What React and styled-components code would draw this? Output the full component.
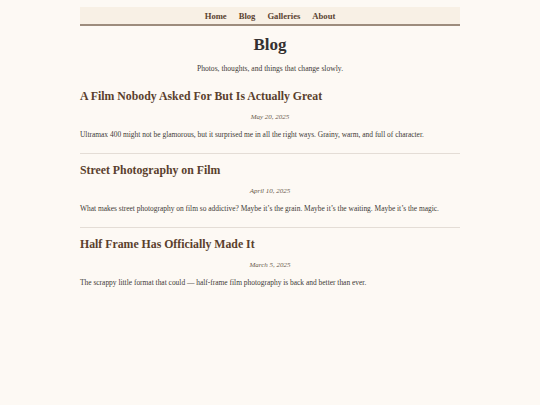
import React from 'react'
import styled, { createGlobalStyle } from 'styled-components'

const GlobalStyle = createGlobalStyle`
  html, body {
    margin: 0;
    padding: 0;
    background: #fdf9f4;
  }
  body {
    font-family: "Liberation Serif", "Times New Roman", serif;
    color: #3d3a36;
  }
`;

const Page = styled.div`
  max-width: 380px;
  margin: 0 auto;
  padding-top: 7px;
`;

const Nav = styled.nav`
  display: flex;
  justify-content: center;
  align-items: center;
  gap: 12px;
  height: 17px;
  background: #f8f0e5;
  border-bottom: 2px solid #9d8c7d;
`;

const NavLink = styled.a`
  font-size: 8.6px;
  font-weight: bold;
  color: #5b4331;
  text-decoration: none;
`;

const Heading = styled.h1`
  margin: 9px 0 0;
  text-align: center;
  font-size: 17px;
  line-height: 20px;
  color: #333030;
`;

const Tagline = styled.p`
  margin: 9px 0 6px;
  text-align: center;
  font-size: 7.6px;
  line-height: 10px;
  color: #3d3a36;
`;

const Post = styled.article`
  padding: 8px 0 13px;
  border-bottom: ${p => (p.$last ? 'none' : '1px solid #e4ddd6')};
`;

const PostTitle = styled.h2`
  margin: 0;
  font-size: 11.8px;
  line-height: 16px;
  color: #5a3f2d;
`;

const PostDate = styled.p`
  margin: 8px 0 0;
  text-align: center;
  font-size: 7px;
  line-height: 10px;
  font-style: italic;
  color: #6a5a4c;
`;

const Excerpt = styled.p`
  margin: 8px 0 0;
  font-size: 7.45px;
  line-height: 10px;
  color: #3d3a36;
`;

const posts = [
  {
    title: 'A Film Nobody Asked For But Is Actually Great',
    date: 'May 20, 2025',
    excerpt: 'Ultramax 400 might not be glamorous, but it surprised me in all the right ways. Grainy, warm, and full of character.',
  },
  {
    title: 'Street Photography on Film',
    date: 'April 10, 2025',
    excerpt: "What makes street photography on film so addictive? Maybe it\u2019s the grain. Maybe it\u2019s the waiting. Maybe it\u2019s the magic.",
  },
  {
    title: 'Half Frame Has Officially Made It',
    date: 'March 5, 2025',
    excerpt: 'The scrappy little format that could \u2014 half-frame film photography is back and better than ever.',
  },
];

const App = () => {
  return (
    <>
      <GlobalStyle />
      <Page>
        <Nav>
          <NavLink href="#">Home</NavLink>
          <NavLink href="#">Blog</NavLink>
          <NavLink href="#">Galleries</NavLink>
          <NavLink href="#">About</NavLink>
        </Nav>
        <Heading>Blog</Heading>
        <Tagline>Photos, thoughts, and things that change slowly.</Tagline>
        {posts.map((post, i) => (
          <Post key={post.title} $last={i === posts.length - 1}>
            <PostTitle>{post.title}</PostTitle>
            <PostDate>{post.date}</PostDate>
            <Excerpt>{post.excerpt}</Excerpt>
          </Post>
        ))}
      </Page>
    </>
  )
}

export default App
